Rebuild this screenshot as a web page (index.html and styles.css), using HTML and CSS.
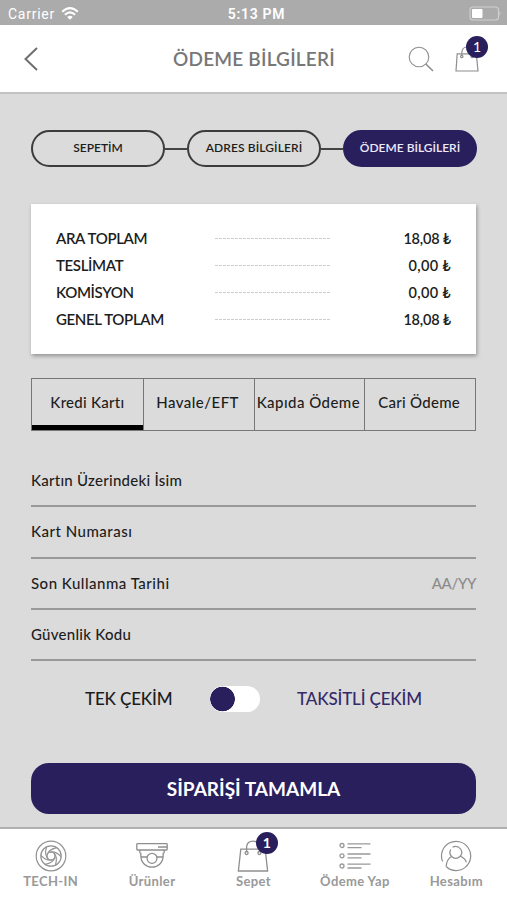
FILE: index.html
```html
<!DOCTYPE html>
<html lang="tr">
<head>
<meta charset="utf-8">
<meta name="viewport" content="width=device-width">
<title>Ödeme Bilgileri</title>
<link rel="stylesheet" href="styles.css">
</head>
<body>
<div class="status">
  <div class="carrier"><span>Carrier</span>
    <svg width="18" height="13" viewBox="0 0 18 13" fill="none" stroke="#fff" stroke-width="2.1"><path d="M1.2 4.7Q9-2.3 16.8 4.7M3.9 7.7Q9 3.2 14.1 7.7"/><path d="M6.2 9.9Q9 7.5 11.8 9.9L9 12.7Z" fill="#fff" stroke="none"/></svg>
  </div>
  <span class="time">5:13 PM</span>
  <svg class="battery" width="33" height="16" viewBox="0 0 33 16"><rect x="1" y="1" width="28.5" height="13" rx="3" fill="none" stroke="#d0d0d0" stroke-width="1.1"/><rect x="3" y="3" width="10.5" height="9" rx="1" fill="#fff"/><path d="M30.5 5.2Q32.5 7.5 30.5 9.8Z" fill="#d0d0d0"/></svg>
</div>
<header class="header">
  <svg class="back" width="16" height="26" viewBox="0 0 16 26" fill="none" stroke="#6f6f6f" stroke-width="2"><path d="M14 2L2.5 13L14 24"/></svg>
  <h1>ÖDEME BİLGİLERİ</h1>
  <svg class="search" width="26" height="26" viewBox="0 0 26 26" fill="none" stroke="#8e8e8e" stroke-width="1.1"><circle cx="11" cy="11" r="9.8"/><path d="M17.8 18L25 25" stroke-width="1.7"/></svg>
  <div class="bag-wrap">
    <svg width="26" height="32" viewBox="0 0 26 32" fill="none" stroke="#8e8e8e" stroke-width="1.2"><path d="M3.2 10.8H22.3L24 28H2Z"/><path d="M7.8 13V10Q8 4 13 4T18.2 10V13"/><circle cx="7.8" cy="13.5" r="1.2"/><circle cx="18.2" cy="13.5" r="1.2"/></svg>
    <span class="badge">1</span>
  </div>
</header>
<main class="main">
  <nav class="steps">
    <span class="step"><span>SEPETİM</span></span><i></i>
    <span class="step"><span class="spaced">ADRES BİLGİLERİ</span></span><i></i>
    <span class="step active"><span>ÖDEME BİLGİLERİ</span></span>
  </nav>
  <section class="totals">
    <div class="total"><span class="name">ARA TOPLAM</span><span class="dash"></span><span class="amount">18,08 ₺</span></div>
    <div class="total"><span class="name">TESLİMAT</span><span class="dash"></span><span class="amount zero">0,00 ₺</span></div>
    <div class="total"><span class="name">KOMİSYON</span><span class="dash"></span><span class="amount zero">0,00 ₺</span></div>
    <div class="total"><span class="name">GENEL TOPLAM</span><span class="dash"></span><span class="amount">18,08 ₺</span></div>
  </section>
  <div class="tabs">
    <span class="tab selected"><span class="t1">Kredi Kartı</span></span><span class="tab"><span class="t2">Havale/EFT</span></span><span class="tab"><span class="t2">Kapıda Ödeme</span></span><span class="tab"><span class="t1">Cari Ödeme</span></span>
  </div>
  <form class="form">
    <div class="field"><label class="f1">Kartın Üzerindeki İsim</label></div>
    <div class="field"><label class="f2">Kart Numarası</label></div>
    <div class="field"><label class="f2">Son Kullanma Tarihi</label><span class="hint">AA/YY</span></div>
    <div class="field"><label class="f1">Güvenlik Kodu</label></div>
  </form>
  <div class="mode"><span class="single">TEK ÇEKİM</span><span class="switch"></span><span class="installments">TAKSİTLİ ÇEKİM</span></div>
  <button class="submit"><span>SİPARİŞİ TAMAMLA</span></button>
</main>
<footer class="tabbar">
  <div class="item">
    <svg width="32" height="32" viewBox="0 0 32 32" fill="none" stroke="#929292" stroke-width="1.2"><circle cx="16" cy="16" r="14.8"/><circle cx="16" cy="16" r="10.2"/><circle cx="16" cy="16" r="4"/><path id="blade" d="M12.1 15.2Q13.2 9.6 21.6 7.6"/><use href="#blade" transform="rotate(60 16 16)"/><use href="#blade" transform="rotate(120 16 16)"/><use href="#blade" transform="rotate(180 16 16)"/><use href="#blade" transform="rotate(240 16 16)"/><use href="#blade" transform="rotate(300 16 16)"/></svg>
    <span>TECH-IN</span>
  </div>
  <div class="item">
    <svg width="32" height="32" viewBox="0 0 32 32" fill="none" stroke="#8e8e8e" stroke-width="1.3"><rect x=".8" y="3.6" width="30.4" height="6.4" rx=".8"/><path d="M22 7H31M3.8 10V12Q3.8 13 4.8 13.3V15.5C5 31 27 31 27.2 15.5V13.3Q28.2 13 28.2 12V10M4.8 17H11.1M20.9 17H27.2"/><circle cx="16" cy="18.3" r="5"/></svg>
    <span>Ürünler</span>
  </div>
  <div class="item">
    <svg width="32" height="32" viewBox="0 0 32 32" fill="none" stroke="#8e8e8e" stroke-width="1.3"><path d="M3.8 9.2H28.2L30.6 31H1.4Z"/><path d="M9.6 12V7Q10.2 1.2 16 1.2T22.4 7V12"/><circle cx="9.6" cy="13" r="1.5"/><circle cx="22.4" cy="13" r="1.5"/></svg>
    <span>Sepet</span><span class="badge bold">1</span>
  </div>
  <div class="item">
    <svg width="32" height="32" viewBox="0 0 32 32" fill="none" stroke="#999" stroke-width="1.3"><circle cx="3" cy="5.5" r="2"/><circle cx="3" cy="15.8" r="2"/><circle cx="3" cy="26" r="2"/><path d="M8.5 3.8H31.5M8.5 7.6H22.5M8.5 14H31.5M8.5 17.8H22.5M8.5 24.2H31.5M8.5 28H22.5"/></svg>
    <span>Ödeme Yap</span>
  </div>
  <div class="item">
    <svg width="32" height="32" viewBox="0 0 32 32" fill="none" stroke="#8e8e8e" stroke-width="1.2"><path d="M2.6 21.5A14.6 14.6 0 1 1 25.5 27.1A14.6 14.6 0 0 1 6.3 26.8"/><path d="M10.8 9.5A5.8 5.8 0 1 0 20.6 9Q17.6 5.2 12.6 7.1M11.9 16.2Q6.6 19 6.1 26.8M20.4 16.2Q25.4 18.5 26.4 22.4"/></svg>
    <span>Hesabım</span>
  </div>
</footer>
</body>
</html>
```
FILE: styles.css
```css
* { box-sizing: border-box; }
body { margin: 0; width: 507px; height: 900px; overflow: hidden; background: #dbdbdb; color: #1d1d1d; font: 500 15px/20px Lato, "Open Sans", sans-serif; display: flex; flex-direction: column; }
svg { display: block; flex: none; }
span, label { white-space: nowrap; }
.status { height: 25px; flex: none; background: #ababab; color: #fff; display: grid; grid-template-columns: 1fr auto 1fr; align-items: center; padding: 2px 5px 0 8px; font-family: Roboto, sans-serif; font-size: 14px; }
.carrier { display: flex; align-items: center; gap: 6px; font-weight: 400; letter-spacing: .75px; }
.time { font-weight: 600; letter-spacing: .7px; margin-left: 3px; }
.battery { justify-self: end; }
.header { height: 69px; flex: none; background: #fff; border-bottom: 2px solid #c2c2c2; display: flex; align-items: center; padding: 0 25px 0 23px; color: #777; }
.header h1 { font-size: 19px; line-height: 24px; font-weight: 600; letter-spacing: .2px; margin: 0 0 0 134px; width: 162px; white-space: nowrap; }
.header .search { margin-left: 73px; }
.bag-wrap { position: relative; margin-left: 20px; }
.badge { position: absolute; left: 12px; top: -7px; width: 22px; height: 22px; border-radius: 50%; background: #291f5d; color: #fff; font: 400 14px/22px Lato, sans-serif; text-align: center; }
.main { padding: 36px 30px 0 31px; height: 733px; flex: none; }
.steps { display: flex; align-items: center; width: 446px; }
.steps i { height: 2px; background: #444; flex: 1; }
.step { width: 134px; height: 37px; border: 2px solid #3c3c3c; border-radius: 19px; display: grid; place-items: center; font-size: 12px; font-weight: 600; padding-bottom: 1px; }
.step.active { background: #291f5d; border-color: #291f5d; color: #eeeafa; }
.step .spaced { letter-spacing: .1px; }
.totals { width: 445px; margin-top: 37px; height: 150px; background: #fff; box-shadow: 1px 2px 4px #0005; padding: 21px 25px; }
.total { height: 27px; display: grid; grid-template-columns: 159px 115px 1fr; align-items: center; }
.name { letter-spacing: -.35px; font-weight: 600; padding-bottom: 2px; }
.dash { height: 1px; background: repeating-linear-gradient(90deg, #ccc 0 3px, transparent 3px 4px); }
.amount { text-align: right; font-weight: 600; font-size: 14.5px; letter-spacing: -.2px; }
.amount.zero { letter-spacing: .3px; }
.tabs { width: 445px; margin-top: 24px; height: 53px; display: grid; grid-template-columns: repeat(4, 1fr); border: 1px solid #777; }
.tab { display: grid; place-items: center; border-left: 1px solid #777; padding: 0 2px 5px 0; }
.tab:first-child { border-left: 0; }
.tab.selected { border-bottom: 5px solid #000; padding: 0; }
.t1 { letter-spacing: .27px; }
.t2 { letter-spacing: .46px; }
.form { width: 445px; margin-top: 25px; }
.field { height: 51.3px; display: flex; justify-content: space-between; align-items: center; border-bottom: 2px solid #999; padding-bottom: 1px; }
.f1 { letter-spacing: .26px; }
.f2 { letter-spacing: .5px; }
.hint { color: #8c8c8c; letter-spacing: -.4px; }
.mode { height: 26px; margin-top: 25px; display: flex; align-items: center; font-size: 17px; letter-spacing: -.15px; }
.single { width: 125px; margin-left: 54px; }
.switch { width: 50px; height: 26px; border-radius: 13px; background: radial-gradient(circle at 12.5px 50%, #291f5d 12px, #fff 12.6px); }
.installments { color: #342a69; margin-left: 37px; }
.submit { display: block; margin: 51px 0 0; padding: 0; width: 445px; height: 51px; border: 0; border-radius: 18px; background: #291f5d; color: #fff; font: 700 19px/24px Lato, sans-serif; }
.tabbar { height: 73px; flex: none; background: #fff; border-top: 2px solid #b0b0b0; display: grid; grid-template-columns: repeat(5, 1fr); }
.item { position: relative; display: flex; flex-direction: column; align-items: center; padding-top: 11px; color: #999; font: 700 13px/18px Lato, sans-serif; letter-spacing: .38px; }
.item .badge { left: 53px; top: 3px; letter-spacing: 0; }
.item .badge.bold { font-weight: 700; }
```
